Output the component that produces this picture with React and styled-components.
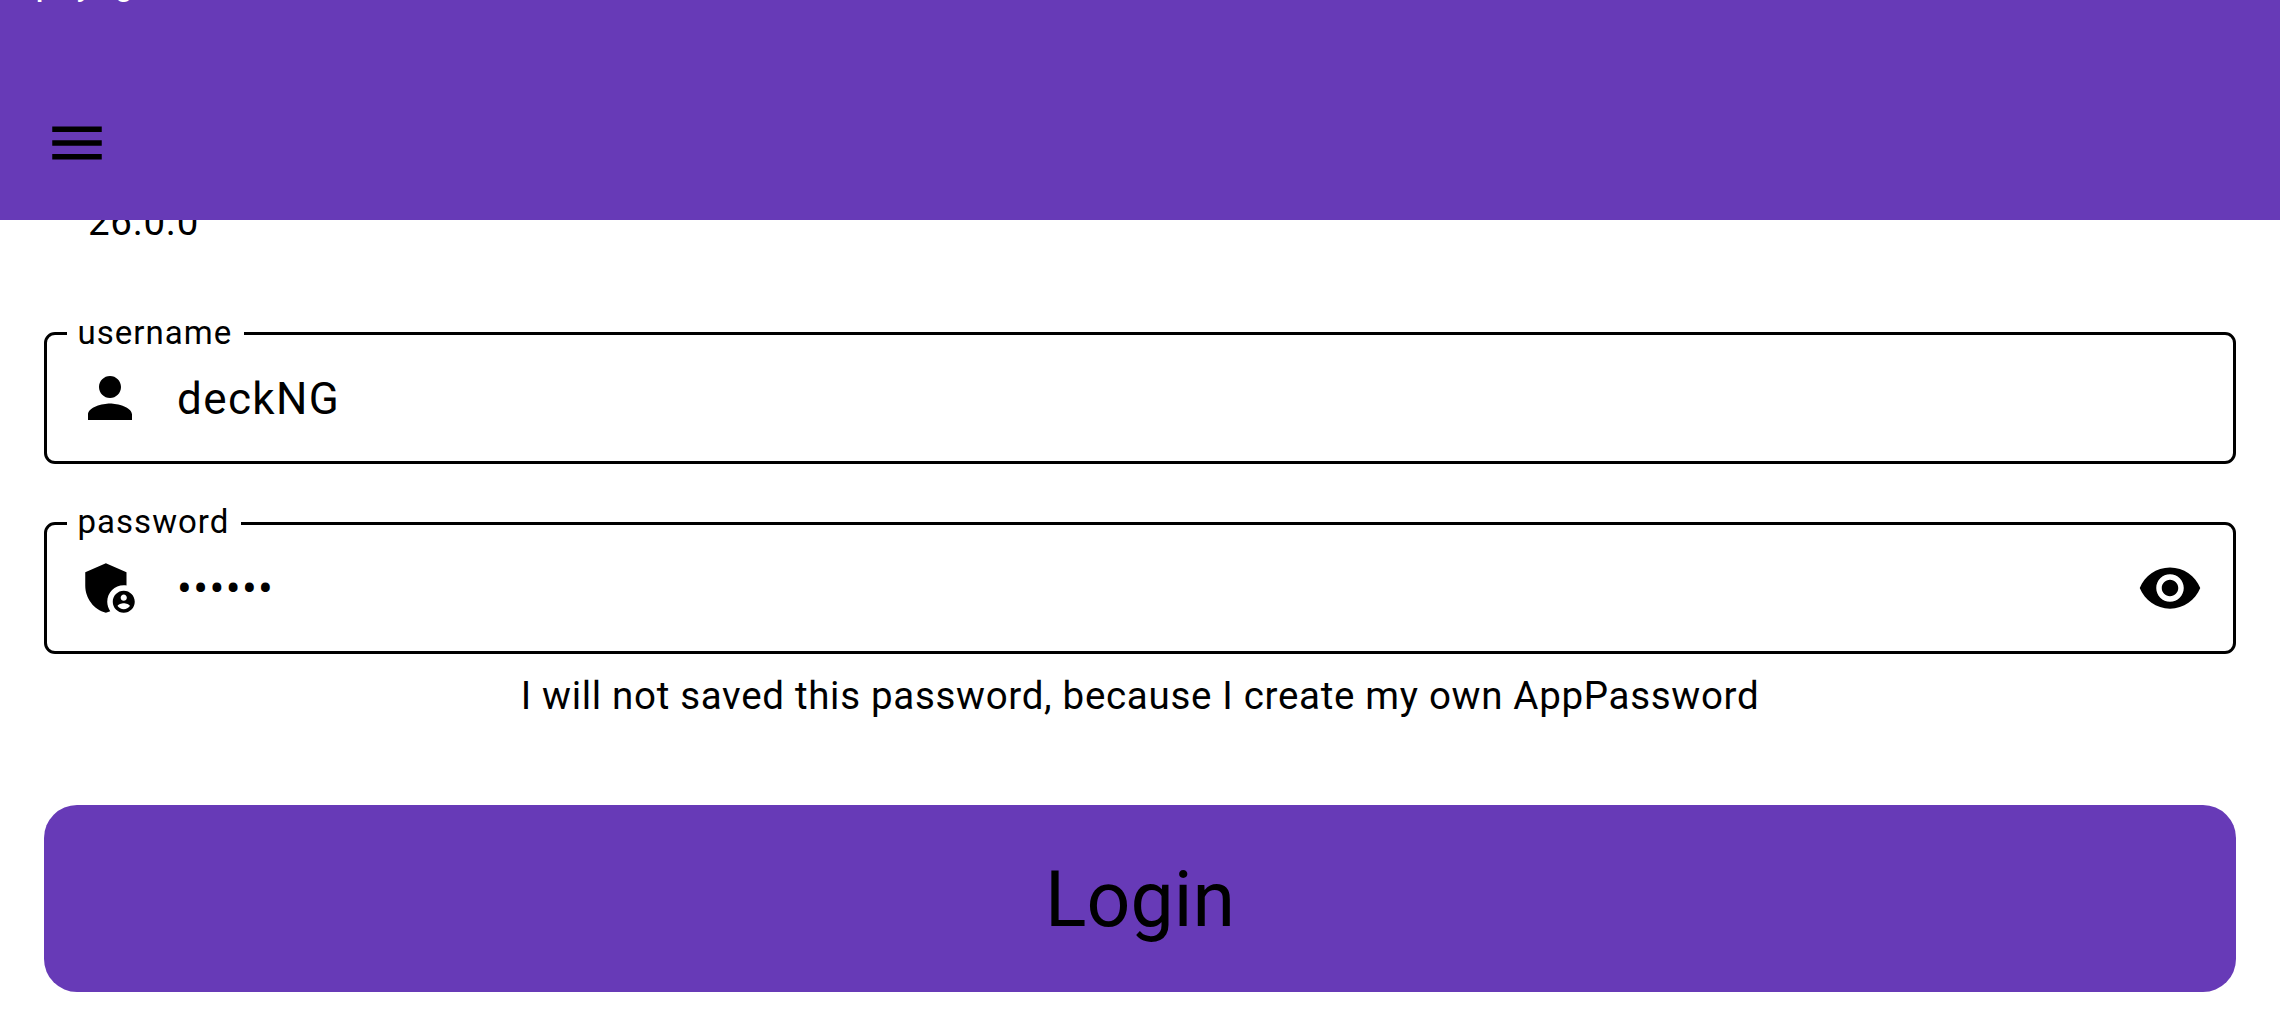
import React from "react";
import styled, { createGlobalStyle } from "styled-components";

const Global = createGlobalStyle`
  * { box-sizing: border-box; }
  body { margin: 0; background: #fff; color: #000; font-family: Roboto, "Liberation Sans", sans-serif; }
`;
const Screen = styled.div`
  height: 1036px;
  overflow: hidden;
  display: flex;
  flex-direction: column;
`;
const Header = styled.header`
  height: 220px;
  flex: none;
  background: #673ab7;
  display: flex;
  flex-direction: column;
  overflow: hidden;
`;
const Ticker = styled.div`
  color: #fff;
  font-size: 30px;
  font-weight: 500;
  line-height: 36px;
  height: 36px;
  margin-top: -32px;
  padding-left: 36px;
  white-space: nowrap;
`;
const MenuButton = styled.button`
  border: 0;
  padding: 0;
  background: none;
  color: #000;
  width: 66px;
  height: 66px;
  margin: 106px 0 0 44px;
`;
const Glyph = styled.svg`
  display: block;
  flex: none;
  width: ${(p) => p.$size}px;
  height: ${(p) => p.$size}px;
  fill: currentColor;
`;
const Form = styled.main`
  flex: 1;
  min-height: 0;
  overflow: hidden;
  padding: 0 44px;
  display: flex;
  flex-direction: column;
`;
const Version = styled.div`
  margin: -20px 0 0 44px;
  height: 44px;
  flex: none;
  font-size: 38.5px;
  line-height: 44px;
  letter-spacing: 0.69px;
`;
const Field = styled.fieldset`
  flex: none;
  min-width: 0;
  height: 150px;
  margin: ${(p) => p.$top}px 0 0;
  border: 3px solid #000;
  border-radius: 11px;
  padding: 0 30px;
`;
const Legend = styled.legend`
  margin-left: -10px;
  padding: 0 12px 0 10.5px;
  height: 38px;
  line-height: ${(p) => p.$line}px;
  font-size: 33px;
  letter-spacing: 1.03px;
`;
const FieldRow = styled.div`
  display: flex;
  align-items: center;
  height: 66px;
  margin-top: 13px;
`;
const Value = styled.span`
  flex: 1;
  padding: 2px 0 0 34px;
  font-size: 44px;
  line-height: 52px;
  letter-spacing: 1.375px;
`;
const Note = styled.p`
  flex: none;
  margin: 16px 0 0;
  text-align: center;
  font-size: 38.5px;
  line-height: 52px;
  letter-spacing: 0.69px;
`;
const LoginButton = styled.button`
  flex: none;
  height: 187px;
  margin-top: 83px;
  padding: 2px 0 0;
  border: 0;
  border-radius: 33px;
  background: #673ab7;
  color: #000;
  font: 400 77px/90px Roboto, "Liberation Sans", sans-serif;
`;

const icons = {
  menu: <path d="M3 18h18v-2H3v2zm0-5h18v-2H3v2zm0-7v2h18V6H3z" />,
  person: <path d="M12 12c2.21 0 4-1.79 4-4s-1.79-4-4-4-4 1.79-4 4 1.79 4 4 4zm0 2c-2.67 0-8 1.34-8 4v2h16v-2c0-2.66-5.33-4-8-4z" />,
  admin: (
    <g fillRule="evenodd">
      <path d="M17 11c.34 0 .67.04 1 .09V6.27L10.5 3 3 6.27v4.91c0 4.54 3.2 8.79 7.5 9.82.55-.13 1.08-.32 1.6-.55-.69-.98-1.1-2.17-1.1-3.45 0-3.31 2.69-6 6-6z" />
      <path d="M17 13c-2.21 0-4 1.79-4 4s1.79 4 4 4 4-1.79 4-4-1.79-4-4-4zm0 1.38c.62 0 1.12.51 1.12 1.12s-.51 1.12-1.12 1.12-1.12-.51-1.12-1.12.5-1.12 1.12-1.12zm0 5.37c-.93 0-1.74-.46-2.24-1.17.05-.72 1.51-1.08 2.24-1.08s2.19.36 2.24 1.08c-.5.71-1.31 1.17-2.24 1.17z" />
    </g>
  ),
  eye: <path d="M12 4.5C7 4.5 2.73 7.61 1 12c1.73 4.39 6 7.5 11 7.5s9.27-3.11 11-7.5c-1.73-4.39-6-7.5-11-7.5zM12 17c-2.76 0-5-2.24-5-5s2.24-5 5-5 5 2.24 5 5-2.24 5-5 5zm0-8c-1.66 0-3 1.34-3 3s1.34 3 3 3 3-1.34 3-3-1.34-3-3-3z" />,
};
const Icon = ({ name, size = 66 }) => (
  <Glyph $size={size} viewBox="0 0 24 24" aria-hidden="true">{icons[name]}</Glyph>
);

export default function App() {
  return (
    <Screen>
      <Global />
      <Header>
        <Ticker>playing</Ticker>
        <MenuButton aria-label="Menu"><Icon name="menu" /></MenuButton>
      </Header>
      <Form>
        <Version>26.0.0</Version>
        <Field $top={70}>
          <Legend $line={38}>username</Legend>
          <FieldRow>
            <Icon name="person" />
            <Value>deckNG</Value>
          </FieldRow>
        </Field>
        <Field $top={40}>
          <Legend $line={36}>password</Legend>
          <FieldRow>
            <Icon name="admin" />
            <Value>••••••</Value>
            <Icon name="eye" />
          </FieldRow>
        </Field>
        <Note>I will not saved this password, because I create my own AppPassword</Note>
        <LoginButton>Login</LoginButton>
      </Form>
    </Screen>
  );
}
